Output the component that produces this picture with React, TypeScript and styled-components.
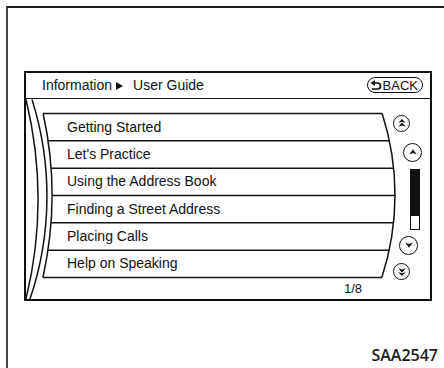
import React from "react";
import styled, { createGlobalStyle } from "styled-components";

const GlobalStyle = createGlobalStyle`
  html, body {
    margin: 0;
    padding: 0;
    background: #ffffff;
  }
  body {
    font-family: "Liberation Sans", Arial, sans-serif;
    color: #111111;
  }
`;

const Page = styled.div`
  width: 444px;
  height: 368px;
  box-sizing: border-box;
  padding: 6px 0 0 6px;
  overflow: hidden;
`;

const Frame = styled.div`
  height: 362px;
  box-sizing: border-box;
  border-top: 2px solid #1c1c1c;
  border-left: 2px solid #444444;
  padding: 63px 6px 0 16px;
  display: flex;
  flex-direction: column;
`;

const Screen = styled.div`
  width: 408px;
  height: 230px;
  box-sizing: border-box;
  border: 2px solid #111111;
  display: flex;
  flex-direction: column;
`;

const Header = styled.div`
  height: 25.5px;
  box-sizing: border-box;
  border-bottom: 1.5px solid #111111;
  display: flex;
  align-items: center;
  padding: 0 7px 0 16px;
`;

const Crumb = styled.div`
  flex: 1;
  display: flex;
  align-items: center;
  font-size: 14px;
`;

const CrumbArrow = styled.span`
  width: 0;
  height: 0;
  border-top: 4px solid transparent;
  border-bottom: 4px solid transparent;
  border-left: 7px solid #111111;
  margin: 1px 10px 0 4px;
`;

const BackButton = styled.div`
  height: 16px;
  box-sizing: border-box;
  border: 1.5px solid #111111;
  border-radius: 9px;
  display: flex;
  align-items: center;
  gap: 1px;
  padding: 0 4px 0 2px;
  font-size: 13px;
  line-height: 1;
`;

const Body = styled.div`
  flex: 1;
  display: flex;
`;

const Drum = styled.div`
  width: 366px;
  display: grid;
`;

const DrumLayer = styled.div`
  grid-area: 1 / 1;
  display: flex;
  flex-direction: column;
  padding: 14.5px 30px 0 41px;
`;

const ArtLayer = styled.svg`
  grid-area: 1 / 1;
  overflow: visible;
`;

const Row = styled.div`
  height: 27.33px;
  display: flex;
  align-items: center;
  font-size: 14px;
`;

const PageCount = styled.div`
  flex: 1;
  display: flex;
  align-items: center;
  justify-content: flex-end;
  font-size: 13px;
  padding-top: 1px;
`;

const Controls = styled.div`
  flex: 1;
  display: flex;
  flex-direction: column;
`;

const RoundButton = styled.div<{ size: number; shift: number; top: number }>`
  width: ${(p) => p.size}px;
  height: ${(p) => p.size}px;
  box-sizing: border-box;
  border: 1.5px solid #111111;
  border-radius: 50%;
  margin-left: ${(p) => p.shift}px;
  margin-top: ${(p) => p.top}px;
  display: flex;
  align-items: center;
  justify-content: center;
`;

const ScrollBar = styled.div<{ shift: number; top: number }>`
  width: 10px;
  height: 61px;
  box-sizing: border-box;
  border: 1.5px solid #111111;
  margin-left: ${(p) => p.shift}px;
  margin-top: ${(p) => p.top}px;
  display: flex;
  flex-direction: column;
`;

const Thumb = styled.div`
  height: 46px;
  background: #111111;
`;

const Label = styled.div`
  margin-top: 44px;
  align-self: flex-end;
  font-family: "Open Sans", "DejaVu Sans", sans-serif;
  font-weight: 600;
  font-size: 16px;
  line-height: 20px;
  color: #1a1a1a;
`;

const items = [
  "Getting Started",
  "Let's Practice",
  "Using the Address Book",
  "Finding a Street Address",
  "Placing Calls",
  "Help on Speaking",
];

const BackIcon = () => (
  <svg width="12" height="11" viewBox="0 0 12 11">
    <path d="M4.5 3 H7.5 A3 3 0 0 1 7.5 9 H2" fill="none" stroke="#111" strokeWidth="1.7" />
    <polygon points="0.5,3 5,0 5,6" fill="#111" />
  </svg>
);

const Arrow = ({ double, down }: { double?: boolean; down?: boolean }) => (
  <svg width="10" height="10" viewBox="0 0 10 10" style={down ? { transform: "rotate(180deg)" } : undefined}>
    {double ? (
      <>
        <polygon points="5,1 8.8,5 5,3.7 1.2,5" fill="#111" />
        <polygon points="5,4.6 8.8,8.8 5,7.4 1.2,8.8" fill="#111" />
      </>
    ) : (
      <polygon points="5,2.2 8.8,7.4 5,5.9 1.2,7.4" fill="#111" />
    )}
  </svg>
);

// the curved "drum" behind the list
const DrumArt = () => {
  const mid = 96;
  const top = 14.5;
  const step = 27.33;
  const bottom = top + step * 6;
  const edge = (R: number, peak: number) => (y: number) =>
    peak - R + Math.sqrt(R * R - (y - mid) * (y - mid));
  const leftX = edge(378, 26);
  const rightX = edge(265, 369);
  const lines = Array.from({ length: 7 }, (_, i) => top + i * step);
  return (
    <ArtLayer width="366" height="200">
      <g fill="none" stroke="#111" strokeWidth="1.5">
        <path d="M0 0.5 A423 423 0 0 1 0 200" />
        <path d="M6 0.5 A320 320 0 0 1 4 200" />
        <path d={`M${leftX(top)} ${top} A378 378 0 0 1 ${leftX(bottom)} ${bottom}`} />
        <path d={`M${rightX(top)} ${top} A265 265 0 0 1 ${rightX(bottom)} ${bottom}`} />
        {lines.map((y) => (
          <line key={y} x1={leftX(y)} y1={y} x2={rightX(y)} y2={y} />
        ))}
      </g>
    </ArtLayer>
  );
};

export default function App() {
  return (
    <>
      <GlobalStyle />
      <Page>
        <Frame>
          <Screen>
            <Header>
              <Crumb>
                Information
                <CrumbArrow />
                User Guide
              </Crumb>
              <BackButton>
                <BackIcon />
                BACK
              </BackButton>
            </Header>
            <Body>
              <Drum>
                <DrumArt />
                <DrumLayer>
                  {items.map((t) => (
                    <Row key={t}>{t}</Row>
                  ))}
                  <PageCount>1/8</PageCount>
                </DrumLayer>
              </Drum>
              <Controls>
                <RoundButton size={17} shift={1} top={16}>
                  <Arrow double />
                </RoundButton>
                <RoundButton size={19} shift={11} top={11}>
                  <Arrow />
                </RoundButton>
                <ScrollBar shift={18} top={7.5}>
                  <Thumb />
                </ScrollBar>
                <RoundButton size={19} shift={7} top={5.5}>
                  <Arrow down />
                </RoundButton>
                <RoundButton size={17} shift={1} top={8.5}>
                  <Arrow double down />
                </RoundButton>
              </Controls>
            </Body>
          </Screen>
          <Label>SAA2547</Label>
        </Frame>
      </Page>
    </>
  );
}
